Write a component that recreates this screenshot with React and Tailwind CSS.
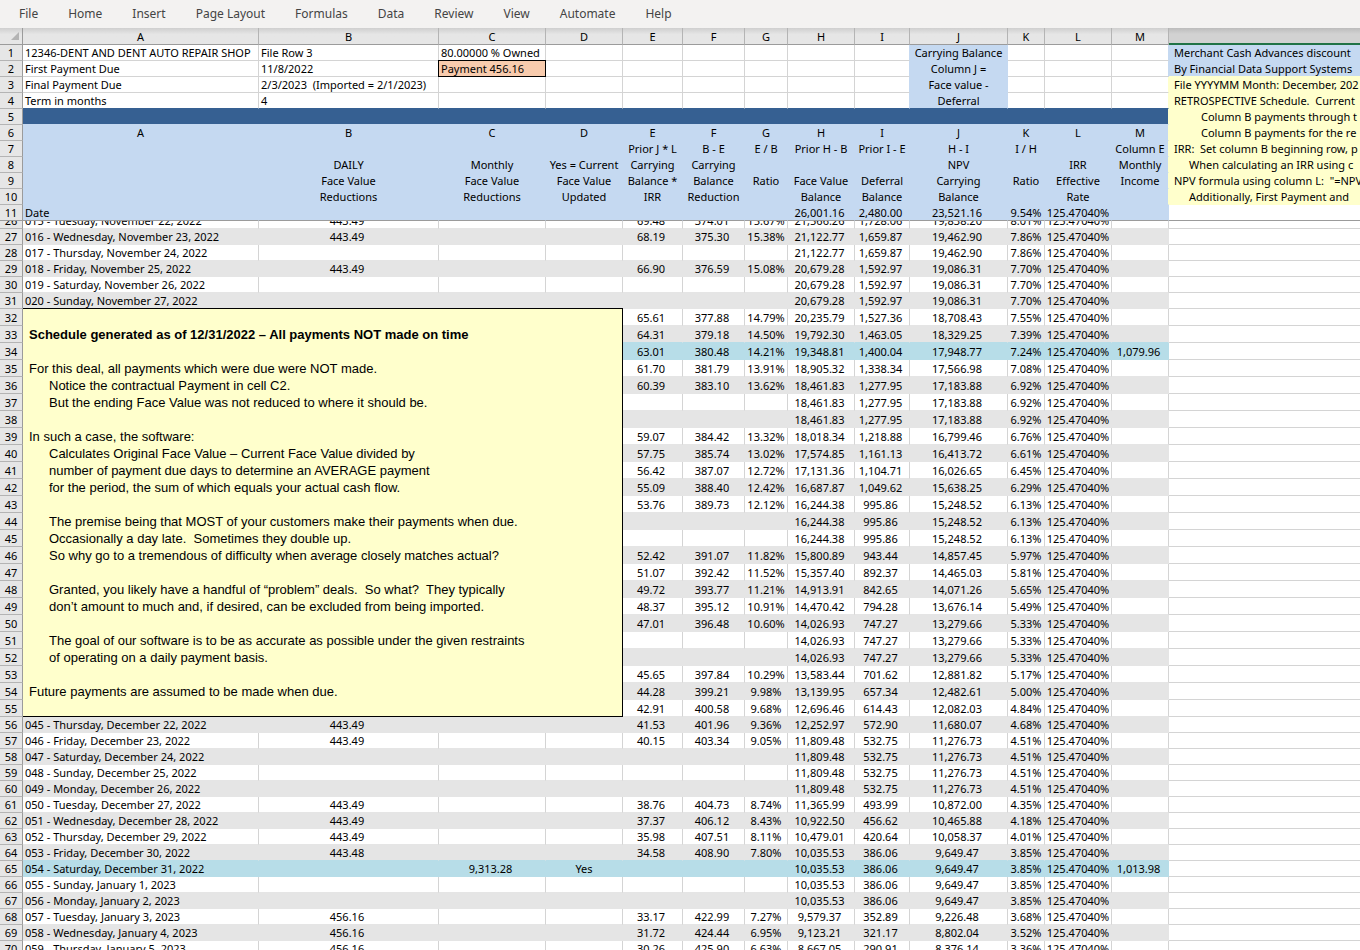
import clsx from 'clsx'

const TABS = ['File', 'Home', 'Insert', 'Page Layout', 'Formulas', 'Data', 'Review', 'View', 'Automate', 'Help']

const COLS = [
  { id: 'A', width: 'w-[236px]' },
  { id: 'B', width: 'w-[180px]' },
  { id: 'C', width: 'w-[107px]' },
  { id: 'D', width: 'w-[77px]' },
  { id: 'E', width: 'w-[60px]' },
  { id: 'F', width: 'w-[62px]' },
  { id: 'G', width: 'w-[43px]' },
  { id: 'H', width: 'w-[67px]' },
  { id: 'I', width: 'w-[55px]' },
  { id: 'J', width: 'w-[98px]' },
  { id: 'K', width: 'w-[37px]' },
  { id: 'L', width: 'w-[67px]' },
  { id: 'M', width: 'w-[57px]' },
]

// rows 1-4
const INFO = [
  ['12346-DENT AND DENT AUTO REPAIR SHOP', 'File Row 3', '80.00000 % Owned', 'Carrying Balance'],
  ['First Payment Due', '11/8/2022', 'Payment 456.16', 'Column J ='],
  ['Final Payment Due', '2/3/2023  (Imported = 2/1/2023)', '', 'Face value -'],
  ['Term in months', '4', '', 'Deferral'],
]

// rows 6-10, columns A to M
const HEADINGS = [
  ['A', 'B', 'C', 'D', 'E', 'F', 'G', 'H', 'I', 'J', 'K', 'L', 'M'],
  ['', '', '', '', 'Prior J * L', 'B - E', 'E / B', 'Prior H - B', 'Prior I - E', 'H - I', 'I / H', '', 'Column E'],
  ['', 'DAILY', 'Monthly', 'Yes = Current', 'Carrying', 'Carrying', '', '', '', 'NPV', '', 'IRR', 'Monthly'],
  ['', 'Face Value', 'Face Value', 'Face Value', 'Balance *', 'Balance', 'Ratio', 'Face Value', 'Deferral', 'Carrying', 'Ratio', 'Effective', 'Income'],
  ['', 'Reductions', 'Reductions', 'Updated', 'IRR', 'Reduction', '', 'Balance', 'Balance', 'Balance', '', 'Rate', ''],
]

// side notes in column N, rows 1-10
const SIDE = [
  { text: 'Merchant Cash Advances discount', pad: 'pl-[5px]' },
  { text: 'By Financial Data Support Systems', pad: 'pl-[5px]' },
  { text: 'File YYYYMM Month: December, 202', pad: 'pl-[5px]' },
  { text: 'RETROSPECTIVE Schedule.  Current', pad: 'pl-[5px]' },
  { text: 'Column B payments through t', pad: 'pl-8' },
  { text: 'Column B payments for the re', pad: 'pl-8' },
  { text: 'IRR:  Set column B beginning row, p', pad: 'pl-[5px]' },
  { text: 'When calculating an IRR using c', pad: 'pl-5' },
  { text: 'NPV formula using column L:  "=NPV', pad: 'pl-[5px]' },
  { text: 'Additionally, First Payment and', pad: 'pl-5' },
]

const RATE = '125.47040%'

// row, A, B, C, D, E, F, G, H, I, J, K, M
const ROWS = [
  [26, '015 - Tuesday, November 22, 2022', '443.49', '', '', '69.48', '374.01', '15.67%', '21,566.26', '1,728.06', '19,838.20', '8.01%', ''],
  [27, '016 - Wednesday, November 23, 2022', '443.49', '', '', '68.19', '375.30', '15.38%', '21,122.77', '1,659.87', '19,462.90', '7.86%', ''],
  [28, '017 - Thursday, November 24, 2022', '', '', '', '', '', '', '21,122.77', '1,659.87', '19,462.90', '7.86%', ''],
  [29, '018 - Friday, November 25, 2022', '443.49', '', '', '66.90', '376.59', '15.08%', '20,679.28', '1,592.97', '19,086.31', '7.70%', ''],
  [30, '019 - Saturday, November 26, 2022', '', '', '', '', '', '', '20,679.28', '1,592.97', '19,086.31', '7.70%', ''],
  [31, '020 - Sunday, November 27, 2022', '', '', '', '', '', '', '20,679.28', '1,592.97', '19,086.31', '7.70%', ''],
  [32, '', '', '', '', '65.61', '377.88', '14.79%', '20,235.79', '1,527.36', '18,708.43', '7.55%', ''],
  [33, '', '', '', '', '64.31', '379.18', '14.50%', '19,792.30', '1,463.05', '18,329.25', '7.39%', ''],
  [34, '', '', '', '', '63.01', '380.48', '14.21%', '19,348.81', '1,400.04', '17,948.77', '7.24%', '1,079.96'],
  [35, '', '', '', '', '61.70', '381.79', '13.91%', '18,905.32', '1,338.34', '17,566.98', '7.08%', ''],
  [36, '', '', '', '', '60.39', '383.10', '13.62%', '18,461.83', '1,277.95', '17,183.88', '6.92%', ''],
  [37, '', '', '', '', '', '', '', '18,461.83', '1,277.95', '17,183.88', '6.92%', ''],
  [38, '', '', '', '', '', '', '', '18,461.83', '1,277.95', '17,183.88', '6.92%', ''],
  [39, '', '', '', '', '59.07', '384.42', '13.32%', '18,018.34', '1,218.88', '16,799.46', '6.76%', ''],
  [40, '', '', '', '', '57.75', '385.74', '13.02%', '17,574.85', '1,161.13', '16,413.72', '6.61%', ''],
  [41, '', '', '', '', '56.42', '387.07', '12.72%', '17,131.36', '1,104.71', '16,026.65', '6.45%', ''],
  [42, '', '', '', '', '55.09', '388.40', '12.42%', '16,687.87', '1,049.62', '15,638.25', '6.29%', ''],
  [43, '', '', '', '', '53.76', '389.73', '12.12%', '16,244.38', '995.86', '15,248.52', '6.13%', ''],
  [44, '', '', '', '', '', '', '', '16,244.38', '995.86', '15,248.52', '6.13%', ''],
  [45, '', '', '', '', '', '', '', '16,244.38', '995.86', '15,248.52', '6.13%', ''],
  [46, '', '', '', '', '52.42', '391.07', '11.82%', '15,800.89', '943.44', '14,857.45', '5.97%', ''],
  [47, '', '', '', '', '51.07', '392.42', '11.52%', '15,357.40', '892.37', '14,465.03', '5.81%', ''],
  [48, '', '', '', '', '49.72', '393.77', '11.21%', '14,913.91', '842.65', '14,071.26', '5.65%', ''],
  [49, '', '', '', '', '48.37', '395.12', '10.91%', '14,470.42', '794.28', '13,676.14', '5.49%', ''],
  [50, '', '', '', '', '47.01', '396.48', '10.60%', '14,026.93', '747.27', '13,279.66', '5.33%', ''],
  [51, '', '', '', '', '', '', '', '14,026.93', '747.27', '13,279.66', '5.33%', ''],
  [52, '', '', '', '', '', '', '', '14,026.93', '747.27', '13,279.66', '5.33%', ''],
  [53, '', '', '', '', '45.65', '397.84', '10.29%', '13,583.44', '701.62', '12,881.82', '5.17%', ''],
  [54, '', '', '', '', '44.28', '399.21', '9.98%', '13,139.95', '657.34', '12,482.61', '5.00%', ''],
  [55, '', '', '', '', '42.91', '400.58', '9.68%', '12,696.46', '614.43', '12,082.03', '4.84%', ''],
  [56, '045 - Thursday, December 22, 2022', '443.49', '', '', '41.53', '401.96', '9.36%', '12,252.97', '572.90', '11,680.07', '4.68%', ''],
  [57, '046 - Friday, December 23, 2022', '443.49', '', '', '40.15', '403.34', '9.05%', '11,809.48', '532.75', '11,276.73', '4.51%', ''],
  [58, '047 - Saturday, December 24, 2022', '', '', '', '', '', '', '11,809.48', '532.75', '11,276.73', '4.51%', ''],
  [59, '048 - Sunday, December 25, 2022', '', '', '', '', '', '', '11,809.48', '532.75', '11,276.73', '4.51%', ''],
  [60, '049 - Monday, December 26, 2022', '', '', '', '', '', '', '11,809.48', '532.75', '11,276.73', '4.51%', ''],
  [61, '050 - Tuesday, December 27, 2022', '443.49', '', '', '38.76', '404.73', '8.74%', '11,365.99', '493.99', '10,872.00', '4.35%', ''],
  [62, '051 - Wednesday, December 28, 2022', '443.49', '', '', '37.37', '406.12', '8.43%', '10,922.50', '456.62', '10,465.88', '4.18%', ''],
  [63, '052 - Thursday, December 29, 2022', '443.49', '', '', '35.98', '407.51', '8.11%', '10,479.01', '420.64', '10,058.37', '4.01%', ''],
  [64, '053 - Friday, December 30, 2022', '443.48', '', '', '34.58', '408.90', '7.80%', '10,035.53', '386.06', '9,649.47', '3.85%', ''],
  [65, '054 - Saturday, December 31, 2022', '', '9,313.28', 'Yes', '', '', '', '10,035.53', '386.06', '9,649.47', '3.85%', '1,013.98'],
  [66, '055 - Sunday, January 1, 2023', '', '', '', '', '', '', '10,035.53', '386.06', '9,649.47', '3.85%', ''],
  [67, '056 - Monday, January 2, 2023', '', '', '', '', '', '', '10,035.53', '386.06', '9,649.47', '3.85%', ''],
  [68, '057 - Tuesday, January 3, 2023', '456.16', '', '', '33.17', '422.99', '7.27%', '9,579.37', '352.89', '9,226.48', '3.68%', ''],
  [69, '058 - Wednesday, January 4, 2023', '456.16', '', '', '31.72', '424.44', '6.95%', '9,123.21', '321.17', '8,802.04', '3.52%', ''],
  [70, '059 - Thursday, January 5, 2023', '456.16', '', '', '30.26', '425.90', '6.63%', '8,667.05', '290.91', '8,376.14', '3.36%', ''],
]

const NOTE = [
  { text: 'For this deal, all payments which were due were NOT made.' },
  { text: 'Notice the contractual Payment in cell C2.', indent: true },
  { text: 'But the ending Face Value was not reduced to where it should be.', indent: true },
  {},
  { text: 'In such a case, the software:' },
  { text: 'Calculates Original Face Value – Current Face Value divided by', indent: true },
  { text: 'number of payment due days to determine an AVERAGE payment', indent: true },
  { text: 'for the period, the sum of which equals your actual cash flow.', indent: true },
  {},
  { text: 'The premise being that MOST of your customers make their payments when due.', indent: true },
  { text: 'Occasionally a day late.  Sometimes they double up.', indent: true },
  { text: 'So why go to a tremendous of difficulty when average closely matches actual?', indent: true },
  {},
  { text: 'Granted, you likely have a handful of “problem” deals.  So what?  They typically', indent: true },
  { text: 'don’t amount to much and, if desired, can be excluded from being imported.', indent: true },
  {},
  { text: 'The goal of our software is to be as accurate as possible under the given restraints', indent: true },
  { text: 'of operating on a daily payment basis.', indent: true },
  {},
  { text: 'Future payments are assumed to be made when due.' },
]

const TONES = {
  white: 'bg-white border-b-[#e5e5e5] border-r-[#d4d4d4]',
  gray:  'bg-[#e5e5e5] border-[#e5e5e5]',
  teal:  'bg-[#b7dde8] border-[#b7dde8]',
  // the row above a teal one
  lead:  'bg-[#e5e5e5] border-r-[#e5e5e5] border-b-[#b7dde8]',
}

// month-end rows are teal and restart the banding
function toneOf(row) {
  if (row === 34 || row === 65) return 'teal'
  if (row === 33 || row === 64) return 'lead'
  if (row < 34) return row % 2 ? 'gray' : 'white'
  if (row < 65) return row % 2 ? 'white' : 'gray'
  return row % 2 ? 'gray' : 'white'
}

const tableCls = 'w-full table-fixed border-separate border-spacing-0 text-[11px] leading-[15px] whitespace-pre text-black'

function Columns() {
  return (
    <colgroup>
      <col className="w-[23px]" />
      {COLS.map(c => <col key={c.id} className={c.width} />)}
      <col />
    </colgroup>
  )
}

function RowHead({ n, last }) {
  return (
    <th scope="row" className={clsx('h-4 overflow-hidden border-r border-b border-r-[#9b9b9b] bg-[#e6e6e6] p-0 text-center font-normal', last ? 'border-b-[#9b9b9b]' : 'border-b-[#b4b4b4]')}>
      {n}
    </th>
  )
}

function Cell({ children, className }) {
  return <td className={clsx('overflow-hidden border-r border-b p-0', className)}>{children}</td>
}

function SideCell({ i }) {
  const { text, pad } = SIDE[i]
  return (
    <td className={clsx('overflow-hidden border-b py-0 pr-0', pad, i < 2 ? 'bg-[#c5d9f1]' : 'bg-[#ffffcc]', i < 1 ? 'border-[#c5d9f1]' : 'border-[#ffffcc]')}>{text}</td>
  )
}

function Ribbon() {
  return (
    <nav className="flex h-7 shrink-0 items-center bg-[#f3f2f1] pl-1 text-[12px] text-[#444]">
      {TABS.map(t => <button key={t} type="button" className="px-[15px] whitespace-nowrap">{t}</button>)}
    </nav>
  )
}

function InfoRow({ data, i }) {
  const [a, b, c, j] = data
  const last = i === INFO.length - 1
  const line = last ? 'border-b-[#366092]' : 'border-b-[#d4d4d4]'
  const plain = clsx('border-r-[#d4d4d4] bg-white', line)
  const text = clsx(plain, 'pl-[2px]')
  return (
    <tr>
      <RowHead n={i + 1} />
      <Cell className={text}>{a}</Cell>
      <Cell className={text}>{b}</Cell>
      {i === 1
        ? <Cell className="border-black bg-[#f8cbad] pl-[2px] shadow-[-1px_-1px_0_#000,-1px_0_0_#000,0_-1px_0_#000]">{c}</Cell>
        : <Cell className={text}>{c}</Cell>}
      <Cell className={plain} />
      <Cell className={plain} />
      <Cell className={plain} />
      <Cell className={plain} />
      <Cell className={plain} />
      <Cell className={clsx('border-r-[#c5d9f1] bg-white', line)} />
      <Cell className={clsx('border-r-[#c5d9f1] bg-[#c5d9f1] text-center', last ? 'border-b-[#366092]' : 'border-b-[#c5d9f1]')}>{j}</Cell>
      <Cell className={plain} />
      <Cell className={plain} />
      <Cell className={clsx('bg-white', line, i < 2 ? 'border-r-[#c5d9f1]' : 'border-r-[#ffffcc]')} />
      <SideCell i={i} />
    </tr>
  )
}

function FrozenRows() {
  return (
    <table className={tableCls}>
      <Columns />
      <thead>
        <tr>
          <th className="h-[17px] border-r border-b border-[#9b9b9b] bg-linear-to-b from-[#cfcfcf] to-[#e6e6e6] to-40% p-0">
            <svg className="ml-auto mr-[3px] block" width="8" height="8" viewBox="0 0 8 8"><path d="M8 0v8H0z" fill="#b4b4b4" /></svg>
          </th>
          {COLS.map(c => (
            <th key={c.id} scope="col" className="border-r border-b border-r-[#b4b4b4] border-b-[#9b9b9b] bg-linear-to-b from-[#cfcfcf] to-[#e6e6e6] to-40% p-0 text-center font-normal">
              {c.id}
            </th>
          ))}
          <th className="border-b-2 border-[#217346] bg-linear-to-b from-[#bcbcbc] to-[#d2d2d2] to-40% p-0"></th>
        </tr>
      </thead>
      <tbody>
        {INFO.map((data, i) => <InfoRow key={data[0]} data={data} i={i} />)}
        <tr>
          <RowHead n={5} />
          <td colSpan={13} className="border-r border-b border-r-[#ffffcc] border-b-[#c5d9f1] bg-[#366092] p-0"></td>
          <SideCell i={4} />
        </tr>
        {HEADINGS.map((cells, r) => (
          <tr key={r}>
            <RowHead n={r + 6} />
            {cells.map((text, c) => (
              <Cell key={c} className={clsx('border-b-[#c5d9f1] bg-[#c5d9f1] text-center', c === 12 ? 'border-r-[#ffffcc]' : 'border-r-[#c5d9f1]')}>{text}</Cell>
            ))}
            <SideCell i={r + 5} />
          </tr>
        ))}
        <tr>
          <RowHead n={11} last />
          {['Date', '', '', '', '', '', '', '26,001.16', '2,480.00', '23,521.16', '9.54%', RATE, ''].map((text, c) => (
            <Cell key={c} className={clsx('border-r-[#c5d9f1] border-b-[#9b9b9b] bg-[#c5d9f1]', c === 0 ? 'pl-[2px]' : 'text-center', c > 6 && c < 10 && 'pr-[3px]')}>{text}</Cell>
          ))}
          <td className="border-b border-[#9b9b9b] bg-white p-0"></td>
        </tr>
      </tbody>
    </table>
  )
}

function ScheduleRow({ data }) {
  const [row, a, b, c, d, e, f, g, h, i, j, k, m] = data
  const tone = TONES[toneOf(row)]
  const num = clsx(tone, 'pr-[3px] text-center')
  const mid = clsx(tone, 'text-center')
  return (
    <tr className={row > 31 && row < 56 ? 'h-[17px]' : 'h-4'}>
      <RowHead n={row} />
      <Cell className={clsx(tone, 'pl-[2px]')}>{a}</Cell>
      <Cell className={num}>{b}</Cell>
      <Cell className={num}>{c}</Cell>
      <Cell className={mid}>{d}</Cell>
      <Cell className={num}>{e}</Cell>
      <Cell className={num}>{f}</Cell>
      <Cell className={mid}>{g}</Cell>
      <Cell className={num}>{h}</Cell>
      <Cell className={num}>{i}</Cell>
      <Cell className={num}>{j}</Cell>
      <Cell className={mid}>{k}</Cell>
      <Cell className={mid}>{RATE}</Cell>
      <Cell className={num}>{m}</Cell>
      <td className="border-b border-[#d4d4d4] bg-white p-0"></td>
    </tr>
  )
}

function Note() {
  return (
    <aside className="absolute top-[95px] left-[23px] h-[409px] w-[600px] border-y border-r border-black bg-[#ffffcc] pt-[17px] pl-[6px] font-['Liberation_Sans',Arial,sans-serif] text-[13px] leading-[17px] whitespace-pre text-black">
      <h2 className="font-bold">Schedule generated as of 12/31/2022 – All payments NOT made on time</h2>
      <div className="pt-[17px]">
        {NOTE.map((line, i) => (
          <p key={i} className={clsx('h-[17px]', line.indent && 'pl-5')}>{line.text}</p>
        ))}
      </div>
    </aside>
  )
}

export default function App() {
  return (
    <div className="flex h-screen flex-col overflow-hidden bg-white font-['Noto_Sans',sans-serif]">
      <Ribbon />
      <div className="shrink-0">
        <FrozenRows />
      </div>
      <div className="min-h-0 flex-1 overflow-hidden">
        {/* scrolled half a row under the frozen pane */}
        <div className="relative -mt-2">
          <table className={tableCls}>
            <Columns />
            <tbody>
              {ROWS.map(r => <ScheduleRow key={r[0]} data={r} />)}
            </tbody>
          </table>
          <Note />
        </div>
      </div>
    </div>
  )
}
